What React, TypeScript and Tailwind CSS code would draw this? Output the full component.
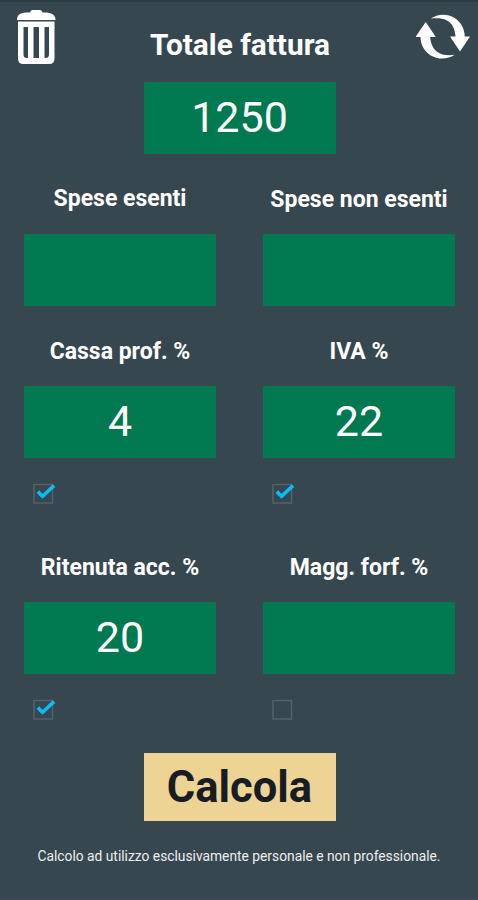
import React, { useState } from "react";

type FieldProps = {
  label: string;
  value: string;
  onChange: (value: string) => void;
  labelClass?: string;
};

const inputClass =
  "block h-[72px] w-48 bg-[#007850] pb-0.5 text-center text-[43px] leading-none text-white outline-none";

function Field({ label, value, onChange, labelClass = "" }: FieldProps) {
  return (
    <label className="block w-48">
      <span
        className={`flex h-7 items-center justify-center whitespace-nowrap text-[23px] font-bold text-white ${labelClass}`}
      >
        {label}
      </span>
      <input
        className={`mt-[21px] ${inputClass}`}
        inputMode="decimal"
        value={value}
        onChange={(e) => onChange(e.target.value)}
      />
    </label>
  );
}

function Check({ checked, onToggle, label }: { checked: boolean; onToggle: () => void; label: string }) {
  return (
    <button
      type="button"
      role="checkbox"
      aria-checked={checked}
      aria-label={label}
      onClick={onToggle}
      className="ml-[9px] block h-6 w-6"
    >
      <svg viewBox="0 0 24 24" className="h-6 w-6">
        <rect x="1" y="3.5" width="18.5" height="18.5" fill="none" stroke="#55646b" strokeWidth="1.4" />
        {checked && (
          <path d="M4.8 10.6 L9.6 15.2 L21 4.6" fill="none" stroke="#0cbbf2" strokeWidth="3.6" />
        )}
      </svg>
    </button>
  );
}

function TrashIcon() {
  return (
    <svg viewBox="0 0 40 56" className="h-14 w-10" fill="#fff">
      <path d="M1 9.5 C1 5.5 4 3 10 2.6 H14 C14.8 .6 15.5 0 17.5 0 H23 C25 0 25.8 .6 26.5 2.6 H30 C36 3 39.5 5.5 39.5 9.5 V10 H1 Z" />
      <path
        fillRule="evenodd"
        d="M2 11.5 H38.5 V48.5 Q38.5 54 33 54 H7.5 Q2 54 2 48.5 Z M7.5 17 V44.5 Q7.5 48 11 48 H12 V17 Z M17.5 17 V48 H23 V17 Z M28.5 17 V48 H29.5 Q33 48 33 44.5 V17 Z"
      />
    </svg>
  );
}

function RefreshIcon() {
  return (
    <svg viewBox="0 0 54 46" className="h-[46px] w-[54px]" fill="#fff">
      <path d="M14.8 4.5 C21 .2 31 -1 38.5 4 C45 8 48.5 14.5 48.8 22.5 H54 L44 37.5 L34 22.5 H39.5 C39 14.5 36 9 30.5 6.2 C26 4 21 4 14.8 4.5 Z" />
      <path d="M38.5 40.8 C32 45.5 22 46 14.8 41.5 C8 37 4.8 31 4.5 23 H-.5 L9.7 8 L19.8 23 H14.2 C14.5 30 17.5 36 23 39 C27.5 41.4 32 41.5 38.5 40.8 Z" />
    </svg>
  );
}

export default function App() {
  const [total, setTotal] = useState("1250");
  const [exempt, setExempt] = useState("");
  const [nonExempt, setNonExempt] = useState("");
  const [fund, setFund] = useState("4");
  const [vat, setVat] = useState("22");
  const [withholding, setWithholding] = useState("20");
  const [flatRate, setFlatRate] = useState("");
  const [checks, setChecks] = useState({ fund: true, vat: true, withholding: true, flatRate: false });

  const toggle = (key: keyof typeof checks) => setChecks({ ...checks, [key]: !checks[key] });

  const clear = () => {
    setTotal("");
    setExempt("");
    setNonExempt("");
  };

  return (
    <div className="flex h-[900px] w-[478px] flex-col overflow-hidden border-t-2 border-b border-t-[#2a3b43] border-b-[#45475a] bg-[#37474f] font-['Roboto',sans-serif]">
      <header className="flex h-20 shrink-0 items-start justify-between pl-4 pr-2">
        <button type="button" aria-label="Cancella" onClick={clear} className="mt-2">
          <TrashIcon />
        </button>
        <h1 className="mt-[25px] whitespace-nowrap pl-[8px] text-[29.8px] font-bold leading-9 text-white">
          Totale fattura
        </h1>
        <button type="button" aria-label="Aggiorna" className="mt-3">
          <RefreshIcon />
        </button>
      </header>

      <input
        aria-label="Totale fattura"
        className={`ml-px shrink-0 self-center ${inputClass}`}
        inputMode="decimal"
        value={total}
        onChange={(e) => setTotal(e.target.value)}
      />

      <main className="grid shrink-0 grid-cols-[192px_192px] gap-x-[47px] pl-6">
        <div className="h-[153px] pt-[31px]">
          <Field label="Spese esenti" value={exempt} onChange={setExempt} labelClass="pt-px" />
        </div>
        <div className="h-[153px] pt-[31px]">
          <Field label="Spese non esenti" value={nonExempt} onChange={setNonExempt} labelClass="pt-[3px]" />
        </div>

        <div className="h-[215px] pt-[30px]">
          <Field label="Cassa prof. %" value={fund} onChange={setFund} labelClass="pt-[3px]" />
          <div className="mt-[23px]">
            <Check label="Cassa prof." checked={checks.fund} onToggle={() => toggle("fund")} />
          </div>
        </div>
        <div className="h-[215px] pt-[30px]">
          <Field label="IVA %" value={vat} onChange={setVat} labelClass="pt-[3px]" />
          <div className="mt-[23px]">
            <Check label="IVA" checked={checks.vat} onToggle={() => toggle("vat")} />
          </div>
        </div>

        <div className="h-[231px] pt-[31px]">
          <Field label="Ritenuta acc. %" value={withholding} onChange={setWithholding} labelClass="pt-[3px]" />
          <div className="mt-[23px]">
            <Check label="Ritenuta acc." checked={checks.withholding} onToggle={() => toggle("withholding")} />
          </div>
        </div>
        <div className="h-[231px] pt-[31px]">
          <Field label="Magg. forf. %" value={flatRate} onChange={setFlatRate} labelClass="pt-[3px]" />
          <div className="mt-[23px]">
            <Check label="Magg. forf." checked={checks.flatRate} onToggle={() => toggle("flatRate")} />
          </div>
        </div>
      </main>

      <button
        type="button"
        className="ml-px h-[68px] w-48 shrink-0 self-center bg-[#edd394] pt-0.5 text-[43.5px] font-bold leading-none text-[#181c25]"
      >
        Calcola
      </button>

      <p className="mt-[25px] whitespace-nowrap text-center text-[13.8px] leading-5 text-[#eceff1]">
        Calcolo ad utilizzo esclusivamente personale e non professionale.
      </p>
    </div>
  );
}
